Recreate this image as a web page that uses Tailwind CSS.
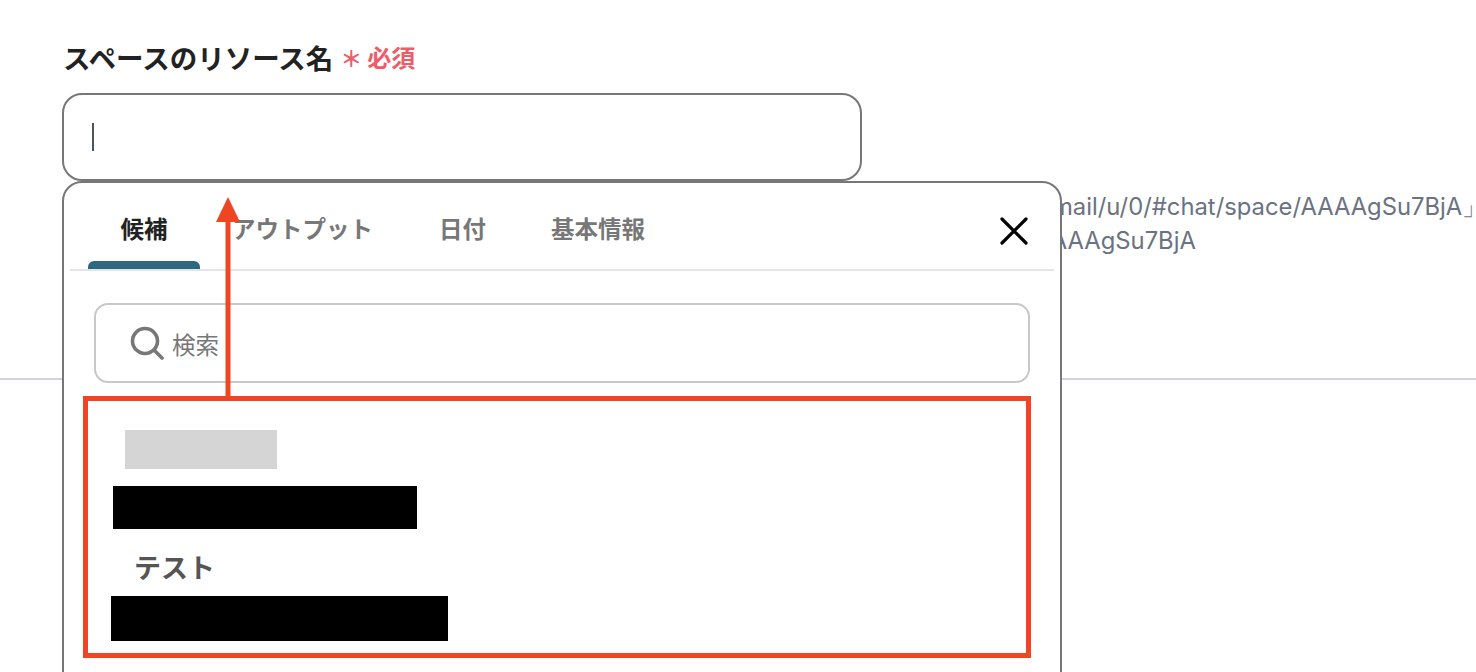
<!DOCTYPE html>
<html lang="ja">
<head>
<meta charset="utf-8">
<script src="https://cdn.jsdelivr.net/npm/@tailwindcss/browser@4"></script>
<title>スペースのリソース名</title>
</head>
<body class="bg-white">
<div class="relative h-[672px] w-[1476px] overflow-hidden bg-white font-['Noto_Sans_CJK_JP','Noto_Sans',sans-serif]">
  <!-- form behind the dropdown -->
  <div class="flex flex-col pt-[39px]">
    <div class="ml-[63px] flex h-[36px] items-center">
      <span class="text-[27.5px] leading-[36px] font-bold text-[#222]">スペースのリソース名</span>
      <span class="ml-[7px] text-[22px] leading-[36px] font-bold text-[#ef5b67]">＊</span>
      <span class="ml-[5px] text-[24px] leading-[36px] font-bold text-[#ef5b67]">必須</span>
    </div>
    <div class="mt-[18px] ml-[62px] flex h-[88px] w-[800px] items-center rounded-[20px] border-2 border-[#777] pl-[28px]">
      <div class="h-[28px] w-[2px] bg-[#4b5563]"></div>
    </div>
    <div class="mt-[9px] font-['Inter',sans-serif] text-[23.8px] leading-[34px] whitespace-nowrap text-[#6b7280]">
      <p class="ml-[1052px]">mail/u/0/#chat/space/AAAAgSu7BjA」</p>
      <p class="ml-[1034px]">AAAAgSu7BjA</p>
    </div>
    <div class="mt-[120px] h-[2px] w-full bg-[#d1d5db]"></div>
  </div>

  <!-- dropdown -->
  <div class="absolute top-[181px] left-[62px] h-[600px] w-[1000px] rounded-t-[20px] border-2 border-[#777] bg-white">
    <div class="mx-[6px] flex h-[88px] items-stretch border-b-2 border-[#e5e5e5] text-[23.5px] font-bold text-[#777]">
      <div class="ml-[18px] flex w-[112px] flex-col items-center">
        <span class="mt-[27px] leading-[36px] text-[#222]">候補</span>
        <div class="mt-auto h-[8px] w-full rounded-t-[6px] bg-[#2d6880]"></div>
      </div>
      <span class="mt-[27px] ml-[32px] leading-[36px]">アウトプット</span>
      <span class="mt-[27px] ml-[66px] leading-[36px]">日付</span>
      <span class="mt-[27px] ml-[65px] leading-[36px]">基本情報</span>
      <svg class="mt-[34px] ml-auto mr-[26px] h-[28px] w-[28px]" viewBox="0 0 28 28" fill="none" stroke="#000" stroke-width="3.2" stroke-linecap="round"><path d="M2 2 26 26M26 2 2 26"/></svg>
    </div>
    <div class="mt-[32px] ml-[30px] flex h-[80px] w-[936px] items-center rounded-[14px] border-2 border-[#c8c8c8] pl-[34px]">
      <svg class="h-[34px] w-[34px]" viewBox="0 0 34 34" fill="none" stroke="#777" stroke-width="3.6" stroke-linecap="round"><circle cx="15" cy="15" r="12.5"/><path d="M25 25 32 32"/></svg>
      <span class="ml-[8px] pt-[3px] text-[23.5px] text-[#777]">検索</span>
    </div>
    <div class="mt-[47px] flex flex-col items-start">
      <div class="ml-[61px] h-[39px] w-[152px] bg-[#d5d5d5]"></div>
      <div class="mt-[17px] ml-[49px] h-[43px] w-[304px] bg-black"></div>
      <span class="mt-[19px] ml-[70px] text-[27px] leading-[38px] font-bold text-[#555]">テスト</span>
      <div class="mt-[10px] ml-[47px] h-[45px] w-[337px] bg-black"></div>
    </div>
  </div>

  <!-- annotation -->
  <div class="absolute top-[396px] left-[83px] h-[262px] w-[948px] border-[5px] border-[#ee4523]"></div>
  <svg class="absolute top-[196px] left-[214px] h-[201px] w-[28px]" viewBox="0 0 28 201" fill="#ee4523"><path d="M14 1 26 26H16.5V201H11.5V26H2Z"/></svg>
</div>
</body>
</html>
